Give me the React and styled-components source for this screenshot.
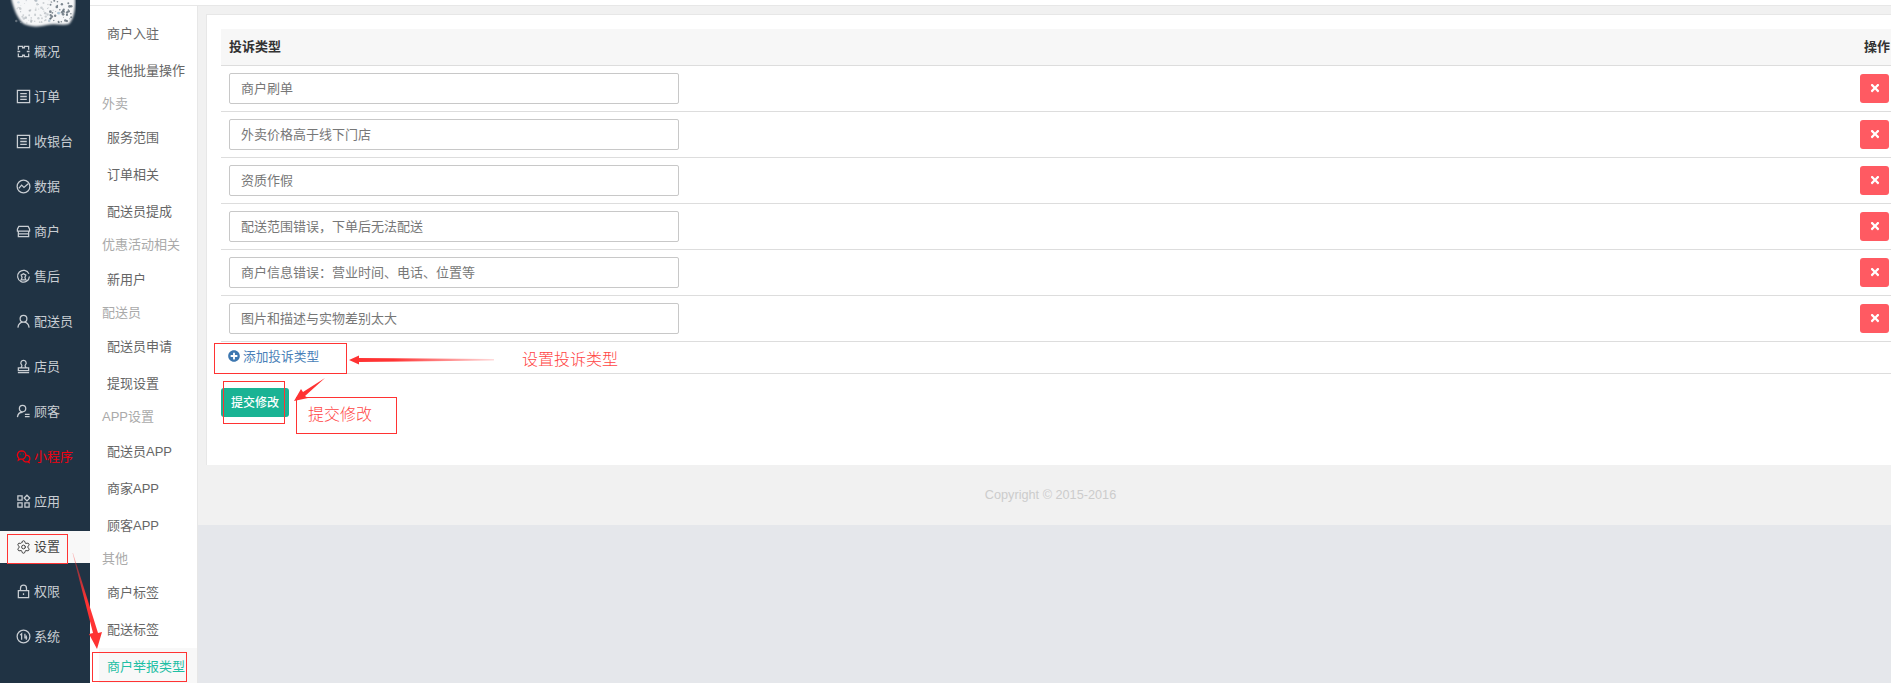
import React from "react";
import styled, { createGlobalStyle } from "styled-components";
import { FaTimes, FaPlusCircle } from "react-icons/fa";
import { Settings } from "lucide-react";

const GlobalStyle = createGlobalStyle`
  html, body {
    margin: 0;
    padding: 0;
    height: 100%;
    overflow: hidden;
    background: #e5e7eb;
    font-family: "Liberation Sans", "Noto Sans CJK SC", sans-serif;
    font-size: 13px;
  }
  * { box-sizing: border-box; }
`;

const Page = styled.div`
  position: relative;
  display: flex;
  width: 1891px;
  height: 683px;
  overflow: hidden;
`;

const Sidebar = styled.aside`
  flex: 0 0 90px;
  background: #203344;
`;

const LogoWrap = styled.div`
  height: 36px;
  padding-left: 10px;
`;

const SideItem = styled.div`
  display: flex;
  align-items: center;
  gap: 3px;
  height: 32px;
  margin-bottom: 13px;
  padding: 0 0 3px 16px;
  font-size: 13px;
  color: ${(p) => (p.$active ? "#444" : p.$red ? "#f2000f" : "#c9ced3")};
  background: ${(p) => (p.$active ? "#f8f8f8" : "transparent")};

  svg {
    position: relative;
    top: 1px;
  }
`;

const IconSvg = styled.svg`
  flex: 0 0 15px;
  width: 15px;
  height: 15px;
  fill: none;
  stroke: currentColor;
  stroke-width: 1.35;
`;

const RightColumn = styled.div`
  flex: 1;
  display: flex;
  flex-direction: column;
  min-width: 0;
`;

const TopStrip = styled.div`
  height: 6px;
  background: #fff;
  border-bottom: 1px solid #e7e7e7;
`;

const Body = styled.div`
  flex: 1;
  display: flex;
  min-height: 0;
`;

const SubNav = styled.nav`
  flex: 0 0 108px;
  padding-top: 8.5px;
  background: #fff;
  border-right: 1px solid #e7e7e7;
`;

const SubGroup = styled.div`
  height: 30.5px;
  line-height: 30.5px;
  padding-left: 12px;
  color: #aaa;
`;

const SubItem = styled.div`
  height: 37px;
  line-height: 37px;
  margin-left: ${(p) => (p.$active ? "9px" : "0")};
  padding-left: ${(p) => (p.$active ? "8px" : "17px")};
  color: ${(p) => (p.$active ? "#1fbfa4" : "#666")};
  background: ${(p) => (p.$active ? "#f8f8f8" : "transparent")};
  white-space: nowrap;
`;

const Main = styled.main`
  flex: 1;
  min-width: 0;
  align-self: flex-start;
  padding: 8px 0 0 8px;
  background: #f1f1f1;
`;

const Card = styled.section`
  padding: 14px 0 48px 14px;
  background: #fff;
  border-top: 1px solid #e7e7e7;
  border-left: 1px solid #e7e7e7;
`;

const HeadRow = styled.div`
  display: flex;
  align-items: center;
  justify-content: space-between;
  height: 37px;
  padding: 0 1px 4px 8px;
  background: #f7f7f7;
  border-bottom: 1px solid #ddd;
  font-weight: 700;
  color: #333;
`;

const Row = styled.div`
  display: flex;
  align-items: center;
  justify-content: space-between;
  height: 46px;
  padding: 0 2px 1px 8px;
  border-bottom: 1px solid #ddd;
`;

const TypeInput = styled.input`
  width: 450px;
  height: 31px;
  padding: 0 11px 2px;
  border: 1px solid #c8c8c8;
  border-radius: 2px;
  outline: none;
  font: inherit;
  color: #777;
  background: #fff;
`;

const RemoveButton = styled.button`
  display: flex;
  align-items: center;
  justify-content: center;
  width: 29px;
  height: 29px;
  padding: 0;
  border: 0;
  border-radius: 3px;
  color: #fff;
  font-size: 12px;
  background: #ff5a62;
`;

const AddRow = styled.div`
  display: flex;
  align-items: center;
  gap: 3px;
  height: 32px;
  padding: 0 0 4px 7px;
  border-bottom: 1px solid #ddd;
  color: #4a7fb8;
  font-size: 12.7px;
`;

const SubmitButton = styled.button`
  display: block;
  width: 68px;
  height: 29px;
  margin-top: 14px;
  padding: 0 0 2px;
  border: 0;
  border-radius: 3px;
  font: inherit;
  font-size: 12px;
  font-weight: 500;
  color: #fff;
  background: #1ab394;
`;

const Footer = styled.footer`
  display: flex;
  align-items: center;
  justify-content: center;
  height: 60px;
  margin-left: -8px;
  padding-left: 12px;
  color: #ccc;
  font-size: 12.7px;
`;

/* red marks somebody drew over the screenshot */
const MarkBox = styled.div`
  position: absolute;
  left: ${(p) => p.$x}px;
  top: ${(p) => p.$y}px;
  width: ${(p) => p.$w}px;
  height: ${(p) => p.$h}px;
  border: 1px solid #f33;
`;

const MarkText = styled.div`
  position: absolute;
  left: ${(p) => p.$x}px;
  top: ${(p) => p.$y}px;
  font-size: 16px;
  font-weight: 300;
  line-height: 20px;
  color: #f44;
  white-space: nowrap;
`;

const MarkArrows = styled.svg`
  position: absolute;
  left: 0;
  top: 0;
  width: 1891px;
  height: 683px;
  pointer-events: none;
`;

const icons = {
  overview: "M2.500 6V2.500h4.500v1.500h2V2.500h4.500V6M2.500 10v3.500h4.500V12h2v1.500h4.500V10M1.500 8h3M11.500 8h3",
  list: "M1.500 1.500h13v13h-13zM4.500 5h7M4.500 8h7M4.500 11h7",
  chart: "M8 1.200a6.800 6.800 0 1 0 0 13.600a6.800 6.800 0 0 0 0-13.600zM3 10l3-3.500 2.500 2.500L13 5",
  store: "M3 2.500h10l1.500 3v2h-13v-2zM2.500 7.500v6h11v-6M2.500 10.500h11",
  service: "M13.800 5.200A6.300 6.300 0 1 0 14.300 8M5.500 6.500L8 5l2.500 1.500-1 2.500 1 2.500h-5l1-2.500z",
  user: "M8 1.500a3.600 3.600 0 1 0 0 7.200a3.600 3.600 0 0 0 0-7.200zM2 14.500c.5-3.500 3-5.800 6-5.800s5.500 2.300 6 5.800",
  staff: "M8 1.500a2.800 2.800 0 0 0-2 4.800c.8 1-.2 2.700-1 3.200h6c-.8-.5-1.800-2.200-1-3.200a2.800 2.800 0 0 0-2-4.800zM2.500 9.500h11v3h-11zM2 14.500h12",
  customer: "M7 1.500a3.400 3.400 0 1 0 0 6.800a3.400 3.400 0 0 0 0-6.800zM1.500 14c.4-3 2.600-5.200 5.500-5.200M9.500 11h5M9.500 13.500h5",
  mini: "M6 2a4.500 4.500 0 0 0-3 7.800L2.500 12l2.300-1.300c2.700.8 5.700-1 5.700-4.200C10.500 4 8.500 2 6 2zM11 6.500c2 .2 3.800 1.800 3.800 3.800 0 1-.5 1.900-1.200 2.600l.4 1.600-1.700-.9c-2.300.6-4.500-.6-5-2.600M4.500 5.500h.5M7.500 5.500h.5",
  apps: "M2 2h4.500v4.500H2zM2 9.500h4.500V14H2zM9.500 9.500H14V14H9.500zM11.700 1.300l3 3-3 3-3-3z",
  lock: "M2.500 7h11v7.500h-11zM4.800 7V4.500a3.200 3.200 0 0 1 6.400 0V7M8 9.800v2",
  system: "M8 1.200a6.800 6.800 0 1 0 0 13.600a6.800 6.800 0 0 0 0-13.600zM4.500 6.500L6 5v6.500M9.500 5v4.500h2.500M11 7v4.500",
};

const Icon = ({ name }) =>
  name === "gear" ? (
    <Settings size={16} strokeWidth={1.6} style={{ flex: "0 0 15px" }} />
  ) : (
    <IconSvg viewBox="0 0 16 16" aria-hidden="true">
      <path d={icons[name]} />
    </IconSvg>
  );

// the blurry logo, faint specks on a white smudge, darker to the right
const rnd = (i, k) => {
  const v = Math.sin(i * 12.9898 + k * 78.233) * 43758.5453;
  return v - Math.floor(v);
};

const specks = Array.from({ length: 110 }, (_, i) => {
  const x = 6 + rnd(i, 1) * 56;
  return {
    x,
    y: rnd(i, 2) * 23,
    r: 0.4 + rnd(i, 3) * 1,
    c: rnd(i, 4) > 0.9 ? "#a9c4d6" : x > 40 ? "#5f6b75" : "#a4abb1",
    o: x > 40 ? 0.8 : 0.5,
  };
});

const Logo = () => (
  <svg width="66" height="30" viewBox="0 0 66 30" aria-hidden="true">
    <defs>
      <filter id="smudge" x="-10%" y="-10%" width="120%" height="130%">
        <feGaussianBlur stdDeviation="1.3" />
      </filter>
      <filter id="specks" x="-5%" y="-5%" width="110%" height="110%">
        <feGaussianBlur stdDeviation="0.6" />
      </filter>
    </defs>
    <path
      d="M1 -3h64c1 10 -1 22 -6 27 -7 2 -14 -1 -22 1 -8 2 -16 2 -23 -1 C8 20 3 8 1 -3z"
      fill="#f6f7f8"
      filter="url(#smudge)"
    />
    <g filter="url(#specks)">
      {specks.map((s, i) => (
        <circle key={i} cx={s.x} cy={s.y} r={s.r} fill={s.c} opacity={s.o} />
      ))}
    </g>
  </svg>
);

const sideItems = [
  ["overview", "概况"],
  ["list", "订单"],
  ["list", "收银台"],
  ["chart", "数据"],
  ["store", "商户"],
  ["service", "售后"],
  ["user", "配送员"],
  ["staff", "店员"],
  ["customer", "顾客"],
  ["mini", "小程序"],
  ["apps", "应用"],
  ["gear", "设置"],
  ["lock", "权限"],
  ["system", "系统"],
];

const subNav = [
  { label: "商户入驻" },
  { label: "其他批量操作" },
  { label: "外卖", group: true },
  { label: "服务范围" },
  { label: "订单相关" },
  { label: "配送员提成" },
  { label: "优惠活动相关", group: true },
  { label: "新用户" },
  { label: "配送员", group: true },
  { label: "配送员申请" },
  { label: "提现设置" },
  { label: "APP设置", group: true },
  { label: "配送员APP" },
  { label: "商家APP" },
  { label: "顾客APP" },
  { label: "其他", group: true },
  { label: "商户标签" },
  { label: "配送标签" },
  { label: "商户举报类型", active: true },
];

const complaintTypes = [
  "商户刷单",
  "外卖价格高于线下门店",
  "资质作假",
  "配送范围错误，下单后无法配送",
  "商户信息错误：营业时间、电话、位置等",
  "图片和描述与实物差别太大",
];

const App = () => {
  return (
    <Page>
      <GlobalStyle />
      <Sidebar>
        <LogoWrap>
          <Logo />
        </LogoWrap>
        {sideItems.map(([icon, label]) => (
          <SideItem key={label} $active={label === "设置"} $red={label === "小程序"}>
            <Icon name={icon} />
            {label}
          </SideItem>
        ))}
      </Sidebar>
      <RightColumn>
        <TopStrip />
        <Body>
          <SubNav>
            {subNav.map((item) =>
              item.group ? (
                <SubGroup key={item.label}>{item.label}</SubGroup>
              ) : (
                <SubItem key={item.label} $active={item.active}>
                  {item.label}
                </SubItem>
              )
            )}
          </SubNav>
          <Main>
            <Card>
              <HeadRow>
                <span>投诉类型</span>
                <span>操作</span>
              </HeadRow>
              {complaintTypes.map((type) => (
                <Row key={type}>
                  <TypeInput defaultValue={type} />
                  <RemoveButton>
                    <FaTimes />
                  </RemoveButton>
                </Row>
              ))}
              <AddRow>
                <FaPlusCircle size={12} color="#3d77b0" />
                添加投诉类型
              </AddRow>
              <SubmitButton>提交修改</SubmitButton>
            </Card>
            <Footer>Copyright © 2015-2016</Footer>
          </Main>
        </Body>
      </RightColumn>

      <MarkBox $x={7} $y={534} $w={61} $h={30} />
      <MarkBox $x={92} $y={652} $w={95} $h={30} />
      <MarkBox $x={214} $y={343} $w={133} $h={31} />
      <MarkBox $x={223} $y={381} $w={62} $h={43} />
      <MarkBox $x={296} $y={397} $w={101} $h={37} />
      <MarkText $x={522} $y={350}>设置投诉类型</MarkText>
      <MarkText $x={308} $y={405}>提交修改</MarkText>
      <MarkArrows viewBox="0 0 1891 683" aria-hidden="true">
        <defs>
          <linearGradient id="fade" x1="349" x2="497" y1="0" y2="0" gradientUnits="userSpaceOnUse">
            <stop offset="0.3" stopColor="#f33" />
            <stop offset="1" stopColor="#f33" stopOpacity="0.15" />
          </linearGradient>
          <linearGradient id="fadeDown" x1="72" x2="97" y1="553" y2="649" gradientUnits="userSpaceOnUse">
            <stop offset="0" stopColor="#f33" stopOpacity="0.3" />
            <stop offset="0.5" stopColor="#f33" />
          </linearGradient>
        </defs>
        <path d="M349 360l10-4.500v2.500l135 1v1.500l-135 1.500v2.500z" fill="url(#fade)" />
        <path d="M325 378l-20 18 3 2-14 3 7-12 2 3z" fill="#f33" />
        <path d="M72.500 553l20.500 80-4 1 8 15 5-17-4 1-25-80z" fill="url(#fadeDown)" />
      </MarkArrows>
    </Page>
  );
};

export default App;
